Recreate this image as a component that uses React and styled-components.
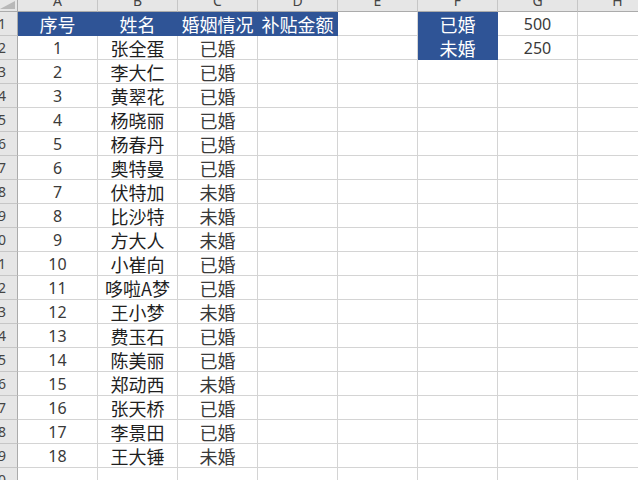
import React from "react";
import styled, { createGlobalStyle } from "styled-components";

const Global = createGlobalStyle`
  html, body { margin: 0; padding: 0; background: #ffffff; overflow: hidden; }
  body { width: 638px; height: 480px; }
`;

const BLUE = "#2f5496";
const GRID = "#d4d4d4";
const HEAD_BG = "#e6e6e6";
const HEAD_LINE = "#c6c6c6";
const HEAD_EDGE = "#ababab";

const Sheet = styled.div`
  display: grid;
  grid-template-columns: 18px repeat(8, 80px);
  grid-template-rows: 12px repeat(20, 24px);
  width: 658px;
  font-family: "Noto Sans CJK SC", "Noto Sans", sans-serif;
`;

const Corner = styled.div`
  box-sizing: border-box;
  background: ${HEAD_BG};
  border-right: 1px solid ${HEAD_EDGE};
  border-bottom: 1px solid ${HEAD_EDGE};
  display: flex;
  justify-content: flex-end;
  align-items: flex-end;
  padding: 0 2px 2px 0;
`;

const CornerTri = styled.div`
  width: 15px;
  height: 8px;
  background: #b8b8b8;
  clip-path: polygon(0 100%, 100% 100%, 100% 0);
`;

const ColHead = styled.div`
  box-sizing: border-box;
  background: ${HEAD_BG};
  border-right: 1px solid ${HEAD_LINE};
  border-bottom: 1px solid ${HEAD_EDGE};
  overflow: hidden;
  display: flex;
  justify-content: center;
  align-items: flex-end;
  padding-bottom: 3px;
  font-family: "Noto Sans", "Liberation Sans", sans-serif;
  font-size: 14px;
  line-height: 14px;
  color: #444444;
`;

const RowHead = styled.div`
  box-sizing: border-box;
  background: ${HEAD_BG};
  border-right: 1px solid ${HEAD_EDGE};
  border-bottom: 1px solid ${HEAD_LINE};
  overflow: hidden;
  display: flex;
  justify-content: flex-end;
  align-items: center;
  padding-right: 11px;
  font-family: "Noto Sans", "Liberation Sans", sans-serif;
  font-size: 14px;
  color: #444444;
  white-space: nowrap;
`;

const Cell = styled.div`
  box-sizing: border-box;
  border-right: 1px solid ${(p) => (p.$fill ? BLUE : GRID)};
  border-bottom: 1px solid ${(p) => (p.$fill ? BLUE : GRID)};
  background: ${(p) => (p.$fill ? BLUE : "#ffffff")};
  color: ${(p) => (p.$fill ? "#ffffff" : p.$strong ? "#1f1f1f" : "#3a3a3a")};
  display: flex;
  align-items: center;
  justify-content: center;
  white-space: nowrap;
  font-size: ${(p) => (p.$num ? "16px" : "18px")};
  font-family: ${(p) =>
    p.$num ? `"Noto Sans", sans-serif` : `"Noto Sans CJK SC", "Noto Sans", sans-serif`};
  line-height: 1;
`;

const people = [
  ["张全蛋", "已婚"],
  ["李大仁", "已婚"],
  ["黄翠花", "已婚"],
  ["杨晓丽", "已婚"],
  ["杨春丹", "已婚"],
  ["奥特曼", "已婚"],
  ["伏特加", "未婚"],
  ["比沙特", "未婚"],
  ["方大人", "未婚"],
  ["小崔向", "已婚"],
  ["哆啦A梦", "已婚"],
  ["王小梦", "未婚"],
  ["费玉石", "已婚"],
  ["陈美丽", "已婚"],
  ["郑动西", "未婚"],
  ["张天桥", "已婚"],
  ["李景田", "已婚"],
  ["王大锤", "未婚"],
];

const cols = ["A", "B", "C", "D", "E", "F", "G", "H"];

function rowCells(r) {
  const cells = cols.map(() => ({ text: "" }));
  if (r === 1) {
    cells[0] = { text: "序号", fill: true };
    cells[1] = { text: "姓名", fill: true };
    cells[2] = { text: "婚姻情况", fill: true };
    cells[3] = { text: "补贴金额", fill: true };
  } else if (r >= 2 && r <= 19) {
    const p = people[r - 2];
    cells[0] = { text: String(r - 1), num: true };
    cells[1] = { text: p[0], strong: true };
    cells[2] = { text: p[1] };
  }
  if (r === 1) {
    cells[5] = { text: "已婚", fill: true };
    cells[6] = { text: "500", num: true };
  }
  if (r === 2) {
    cells[5] = { text: "未婚", fill: true };
    cells[6] = { text: "250", num: true };
  }
  return cells;
}

export default function App() {
  const rows = Array.from({ length: 20 }, (_, i) => i + 1);
  return (
    <>
      <Global />
      <Sheet>
        <Corner>
          <CornerTri />
        </Corner>
        {cols.map((c) => (
          <ColHead key={c}>{c}</ColHead>
        ))}
        {rows.map((r) => (
          <React.Fragment key={r}>
            <RowHead>{r}</RowHead>
            {rowCells(r).map((c, i) => (
              <Cell key={i} $fill={c.fill} $num={c.num} $strong={c.strong}>
                {c.text}
              </Cell>
            ))}
          </React.Fragment>
        ))}
      </Sheet>
    </>
  );
}
